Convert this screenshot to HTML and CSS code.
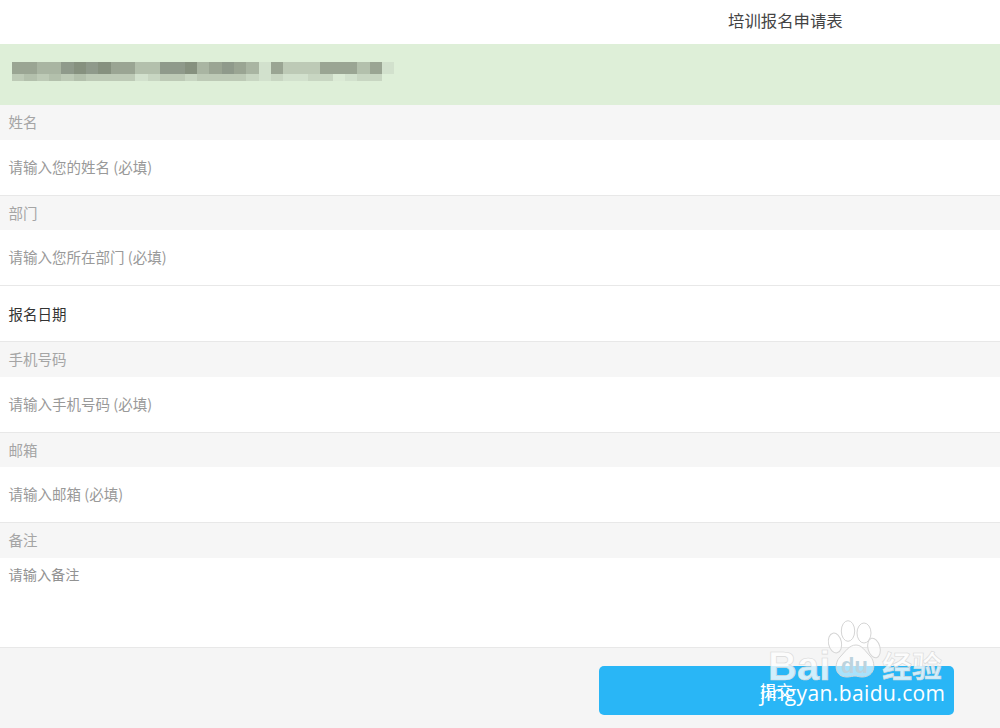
FILE: index.html
```html
<!DOCTYPE html>
<html lang="zh-CN">
<head>
<meta charset="utf-8">
<title>培训报名申请表</title>
<link rel="stylesheet" href="styles.css">
</head>
<body>
<header class="title">培训报名申请表</header>
<section class="notice">
  <div class="mosaic">
    <div class="mrow mtop">
      <i class="c3"></i><i class="c3"></i><i class="c4"></i><i class="c4"></i><i class="c2"></i><i class="c1"></i><i class="c2"></i><i class="c1"></i><i class="c3"></i><i class="c3"></i><i class="c5"></i><i class="c5"></i><i class="c2"></i><i class="c2"></i><i class="c1"></i><i class="c4"></i><i class="c3"></i><i class="c2"></i><i class="c3"></i><i class="c4"></i><i class="c8"></i><i class="c3"></i><i class="c6"></i><i class="c6"></i><i class="c6"></i><i class="c3"></i><i class="c3"></i><i class="c3"></i><i class="c5"></i><i class="c3"></i><i class="c8"></i>
    </div>
    <div class="mrow mbottom">
      <i class="c6"></i><i class="c5"></i><i class="c6"></i><i class="c5"></i><i class="c6"></i><i class="c5"></i><i class="c6"></i><i class="c6"></i><i class="c6"></i><i class="c6"></i><i class="c8"></i><i class="c7"></i><i class="c6"></i><i class="c6"></i><i class="c7"></i><i class="c6"></i><i class="c6"></i><i class="c6"></i><i class="c6"></i><i class="c7"></i><i class="c8"></i><i class="c7"></i><i class="c8"></i><i class="c8"></i><i class="c7"></i><i class="c7"></i><i class="c9"></i><i class="c8"></i><i class="c7"></i><i class="c7"></i>
    </div>
  </div>
</section>
<main class="form">
  <div class="label">姓名</div>
  <div class="field">请输入您的姓名 (必填)</div>
  <div class="label">部门</div>
  <div class="field">请输入您所在部门 (必填)</div>
  <div class="field date">报名日期</div>
  <div class="label">手机号码</div>
  <div class="field">请输入手机号码 (必填)</div>
  <div class="label">邮箱</div>
  <div class="field">请输入邮箱 (必填)</div>
  <div class="label">备注</div>
  <div class="textarea">请输入备注</div>
</main>
<footer class="footer">
  <button class="submit" type="button">提交</button>
</footer>
<div class="watermark">
  <svg class="paw" width="60" height="60" viewBox="0 0 60 60">
    <g fill="#fff" fill-opacity=".6" stroke="#d5d5d5" stroke-width="1">
      <ellipse cx="10" cy="23" rx="6.5" ry="10" transform="rotate(-12 10 23)"/>
      <ellipse cx="23" cy="11" rx="6.7" ry="10.3"/>
      <ellipse cx="39" cy="13" rx="7" ry="10"/>
      <ellipse cx="49" cy="28" rx="6" ry="10" transform="rotate(-15 49 28)"/>
      <path d="M31 25c6 0 9 6 14 11 6 6 6 21-8 21-3 0-5-1-7-1s-5 1-8 1c-13 0-13-14-7-20 5-5 9-12 16-12z"/>
    </g>
  </svg>
  <div class="wm-bai">Bai</div>
  <div class="wm-du">du</div>
  <div class="wm-cn">经验</div>
  <div class="wm-url">jingyan.baidu.com</div>
</div>
</body>
</html>
```
FILE: styles.css
```css
* { box-sizing: border-box; }
html, body { margin: 0; padding: 0; }
body {
  position: relative;
  width: 1000px;
  height: 728px;
  overflow: hidden;
  background: #fff;
  font-family: "Noto Sans CJK SC", "Liberation Sans", sans-serif;
  font-size: 14.5px;
  color: #999;
}
.title {
  height: 44px;
  padding-left: 728px;
  font-size: 16.4px;
  line-height: 41px;
  color: #444;
}
.notice {
  height: 61px;
  padding: 18px 0 0 12px;
  background: #deefd8;
}
.mosaic { display: flex; flex-direction: column; }
.mrow { display: flex; }
.mrow i { display: block; width: 12.34px; flex: none; }
.mtop i { height: 12px; }
.mbottom i { height: 7px; }
.c1 { background: #86917f; }
.c2 { background: #8f9a8b; }
.c3 { background: #9aa593; }
.c4 { background: #a9b5a2; }
.c5 { background: #b3c0ac; }
.c6 { background: #bdcab6; }
.c7 { background: #c8d6c2; }
.c8 { background: #d2e1cd; }
.c9 { background: #dbead5; }
.label {
  height: 34.6px;
  padding-left: 8.5px;
  line-height: 34px;
  background: #f6f6f6;
  color: #a5a5a5;
}
.field {
  height: 56px;
  padding-left: 8.5px;
  line-height: 53px;
  background: #fff;
  border-bottom: 1px solid #e8e8e8;
  color: #999;
}
.date { color: #333; line-height: 56px; }
.textarea {
  height: 90px;
  padding: 6px 0 0 8.5px;
  font-size: 14.2px;
  line-height: 20px;
  background: #fff;
  border-bottom: 1px solid #e8e8e8;
  color: #929292;
}
.footer {
  height: 80px;
  padding: 18px 46px 0 599px;
  background: #f5f5f5;
}
.submit {
  display: block;
  width: 355px;
  height: 49px;
  border: 0;
  border-radius: 5px;
  background: #29b6f6;
  color: #fff;
  font: inherit;
  font-size: 16.4px;
}
.watermark {
  position: absolute;
  left: 760px;
  top: 615px;
  width: 190px;
  height: 95px;
  color: #fff;
  font-family: "Open Sans", "Noto Sans CJK SC", sans-serif;
}
.paw { position: absolute; left: 65px; top: 5px; }
.wm-bai, .wm-du, .wm-cn {
  position: absolute;
  white-space: nowrap;
  font-weight: 700;
  font-family: "Liberation Sans", sans-serif;
}
.wm-bai {
  left: 8px;
  top: 28px;
  font-size: 40px;
  line-height: 46px;
  -webkit-text-stroke: .6px #d8d8d8;
  color: rgba(255, 255, 255, .8);
}
.wm-du {
  left: 81px;
  top: 38px;
  font-size: 22px;
  line-height: 26px;
  color: #bcd3de;
}
.wm-cn {
  left: 122px;
  top: 27px;
  font-size: 30px;
  line-height: 44px;
  font-family: "Noto Sans CJK SC", sans-serif;
  -webkit-text-stroke: .6px #d8d8d8;
  color: rgba(255, 255, 255, .8);
}
.wm-url {
  position: absolute;
  left: 0;
  top: 65px;
  font-size: 21px;
  line-height: 26px;
  letter-spacing: .4px;
  white-space: nowrap;
}
```
